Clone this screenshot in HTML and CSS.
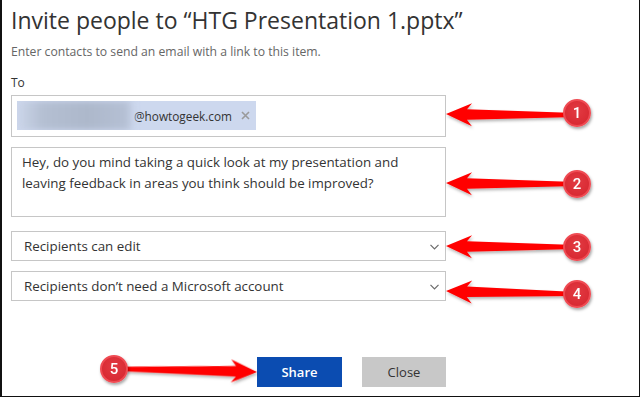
FILE: index.html
```html
<!DOCTYPE html>
<html lang="en">
<head>
<meta charset="utf-8">
<title>Invite people</title>
<link rel="stylesheet" href="styles.css">
</head>
<body>
<div class="dialog">
  <h1 class="title">Invite people to “HTG Presentation 1.pptx”</h1>
  <p class="subtitle">Enter contacts to send an email with a link to this item.</p>
  <div class="to-label">To</div>
  <div class="field to-field">
    <span class="chip"><span class="blur"></span><span class="chip-text">@howtogeek.com</span>
      <svg class="chip-x" width="9" height="9" viewBox="0 0 9 9"><path d="M1 1 L8 8 M8 1 L1 8" stroke="#9a9a9a" stroke-width="1.6" fill="none"/></svg>
    </span>
  </div>
  <div class="field message">Hey, do you mind taking a quick look at my presentation and leaving feedback in areas you think should be improved?</div>
  <div class="field select first-select"><span>Recipients can edit</span>
    <svg class="chev" width="9" height="6" viewBox="0 0 9 6"><path d="M0.5 0.8 L4.5 4.8 L8.5 0.8" fill="none" stroke="#6b6b6b" stroke-width="1.2"/></svg>
  </div>
  <div class="field select"><span>Recipients don’t need a Microsoft account</span>
    <svg class="chev" width="9" height="6" viewBox="0 0 9 6"><path d="M0.5 0.8 L4.5 4.8 L8.5 0.8" fill="none" stroke="#6b6b6b" stroke-width="1.2"/></svg>
  </div>
  <div class="actions">
    <button class="btn share">Share</button>
    <button class="btn close">Close</button>
  </div>

  <svg class="annotations" width="640" height="398" viewBox="0 0 640 398">
    <defs>
      <filter id="sh" x="-10%" y="-50%" width="120%" height="200%">
        <feDropShadow dx="1" dy="2" stdDeviation="1.5" flood-color="#000" flood-opacity="0.3"/>
      </filter>
    </defs>
    <g fill="#ff0000" filter="url(#sh)">
      <path transform="translate(446 114) rotate(0.4)" d="M0 0 L26 -11 L21 -5 L130 -2 L130 2 L21 5.5 L26 12 Z"/>
      <path transform="translate(446 183) rotate(0.4)" d="M0 0 L26 -11 L21 -5 L130 -2 L130 2 L21 5.5 L26 12 Z"/>
      <path transform="translate(446 246) rotate(0.4)" d="M0 0 L26 -11 L21 -5 L130 -2 L130 2 L21 5.5 L26 12 Z"/>
      <path transform="translate(446 291) rotate(1.3)" d="M0 0 L26 -11 L21 -5 L130 -2 L130 2 L21 5.5 L26 12 Z"/>
      <path transform="translate(257 372) rotate(181.3)" d="M0 0 L26 -11 L21 -5 L143 -2 L143 2 L21 5.5 L26 12 Z"/>
    </g>
  </svg>
  <div class="badge b1">1</div>
  <div class="badge b2">2</div>
  <div class="badge b3">3</div>
  <div class="badge b4">4</div>
  <div class="badge b5">5</div>
</div>
</body>
</html>
```
FILE: styles.css
```css
* { box-sizing: border-box; }
html, body { margin: 0; padding: 0; background: #fff; }
body { font-family: "Open Sans", "Noto Sans", sans-serif; color: #333; }

.dialog {
  position: relative;
  width: 640px;
  height: 397px;
  border-left: 2px solid #111;
  border-right: 1px solid #111;
  border-bottom: 1px solid #111;
  padding: 6px 0 0 9px;
}

.title {
  margin: 0;
  font-weight: 400;
  font-size: 23px;
  line-height: 28px;
  color: #333;
}

.subtitle {
  margin: 8px 0 0;
  font-size: 12.2px;
  line-height: 20px;
  color: #666;
}

.to-label {
  margin-top: 12px;
  font-size: 12px;
  line-height: 18px;
  color: #333;
}

.field {
  width: 435px;
  border: 1px solid #c6c6c6;
  background: #fff;
  font-size: 13.35px;
  color: #333;
}

.to-field {
  margin-top: 3px;
  height: 42px;
  padding: 5px;
  display: flex;
  align-items: flex-start;
}

.chip {
  display: flex;
  align-items: center;
  height: 29px;
  padding-right: 6px;
  background: #cdd8ee;
  overflow: hidden;
}
.blur {
  width: 117px;
  height: 29px;
  flex: none;
  background: linear-gradient(90deg, #ccd6ea 0%, #b4bfd2 22%, #adb8cb 60%, #b5c0d4 94%, #cdd8ee 100%);
  filter: blur(3px);
}
.chip-text {
  font-size: 11.8px;
  color: #333;
}
.chip-x {
  display: block;
  margin-left: 9px;
}

.message {
  margin-top: 10px;
  height: 70px;
  padding: 4px 12px 0 10px;
  line-height: 21px;
}

.select {
  margin-top: 10px;
  height: 30px;
  padding: 0 6px 0 12px;
  display: flex;
  align-items: center;
  justify-content: space-between;
}
.first-select { margin-top: 14px; }
.chev { display: block; margin-top: 1px; }

.actions {
  width: 435px;
  margin-top: 56px;
  display: flex;
  justify-content: flex-end;
  gap: 20px;
}
.btn {
  height: 30px;
  border: 0;
  font-family: "Open Sans", "Noto Sans", sans-serif;
  font-size: 13px;
  padding: 0;
  cursor: pointer;
}
.share {
  width: 85px;
  background: #0b4cb1;
  color: #fff;
  font-weight: 600;
}
.close {
  width: 84px;
  background: #c8c8c8;
  color: #333;
}

.annotations {
  position: absolute;
  left: -2px;
  top: 0;
  pointer-events: none;
}

.badge {
  position: absolute;
  width: 28px;
  height: 28px;
  margin: -14px 0 0 -14px;
  border-radius: 50%;
  background: radial-gradient(circle at 50% 40%, #e23a42 0%, #d92b34 70%);
  border: 2px solid #ef4b53;
  box-shadow: 1px 2px 3px rgba(0, 0, 0, 0.35);
  color: #fff;
  font-family: Roboto, "Noto Sans", sans-serif;
  font-weight: 500;
  font-size: 15px;
  line-height: 24px;
  text-align: center;
}
.b1 { left: 575px; top: 113px; }
.b2 { left: 575px; top: 184px; }
.b3 { left: 575px; top: 247px; }
.b4 { left: 575px; top: 294px; }
.b5 { left: 112px; top: 369px; }
```
